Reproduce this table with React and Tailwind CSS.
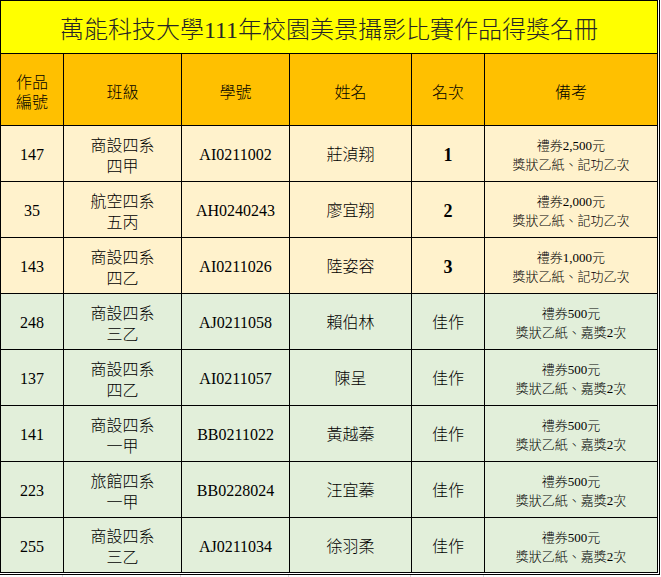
import React from "react";

const rows = [
  { no: "147", cls: ["商設四系", "四甲"], id: "AI0211002", name: "莊湞翔", rank: "1", note: ["禮券2,500元", "獎狀乙紙、記功乙次"], top: true },
  { no: "35", cls: ["航空四系", "五丙"], id: "AH0240243", name: "廖宜翔", rank: "2", note: ["禮券2,000元", "獎狀乙紙、記功乙次"], top: true },
  { no: "143", cls: ["商設四系", "四乙"], id: "AI0211026", name: "陸姿容", rank: "3", note: ["禮券1,000元", "獎狀乙紙、記功乙次"], top: true },
  { no: "248", cls: ["商設四系", "三乙"], id: "AJ0211058", name: "賴伯林", rank: "佳作", note: ["禮券500元", "獎狀乙紙、嘉獎2次"] },
  { no: "137", cls: ["商設四系", "四乙"], id: "AI0211057", name: "陳呈", rank: "佳作", note: ["禮券500元", "獎狀乙紙、嘉獎2次"] },
  { no: "141", cls: ["商設四系", "一甲"], id: "BB0211022", name: "黃越蓁", rank: "佳作", note: ["禮券500元", "獎狀乙紙、嘉獎2次"] },
  { no: "223", cls: ["旅館四系", "一甲"], id: "BB0228024", name: "汪宜蓁", rank: "佳作", note: ["禮券500元", "獎狀乙紙、嘉獎2次"] },
  { no: "255", cls: ["商設四系", "三乙"], id: "AJ0211034", name: "徐羽柔", rank: "佳作", note: ["禮券500元", "獎狀乙紙、嘉獎2次"] },
];

const font = "font-['Liberation_Serif','Noto_Sans_CJK_TC',serif]";

function Cell({ bg, children, className = "" }) {
  return (
    <div className={`${bg} flex flex-col items-center justify-center text-center ${className}`}>
      {children}
    </div>
  );
}

export default function App() {
  const headers = [
    ["作品", "編號"],
    ["班級"],
    ["學號"],
    ["姓名"],
    ["名次"],
    ["備考"],
  ];
  return (
    <div className={`w-[661px] h-[577px] bg-white ${font} text-black font-light`}>
      <div className="inline-flex flex-col bg-white pr-px pb-px border-r border-b border-black">
        <div className="grid grid-cols-[62px_117px_107px_121px_72px_172px] grid-rows-[52px_71px_repeat(7,55px)_54px] gap-px bg-black p-px">
          <div className="col-span-6 bg-[#ffff00] flex items-center justify-center text-[24px] leading-none text-[#262626] pt-[5px]">
            萬能科技大學111年校園美景攝影比賽作品得獎名冊
          </div>
          {headers.map((h, i) => (
            <Cell key={i} bg="bg-[#ffc000]" className="text-[16px] leading-[20px] pt-[7px]">
              {h.map((t) => (
                <span key={t}>{t}</span>
              ))}
            </Cell>
          ))}
          {rows.map((r) => {
            const bg = r.top ? "bg-[#fff2cc]" : "bg-[#e2efda]";
            return (
              <React.Fragment key={r.no}>
                <Cell bg={bg} className="text-[16px] pt-[3px]">{r.no}</Cell>
                <Cell bg={bg} className="text-[16px] leading-[21px] pt-[4px]">
                  <span>{r.cls[0]}</span>
                  <span>{r.cls[1]}</span>
                </Cell>
                <Cell bg={bg} className="text-[16px] pt-[3px]">{r.id}</Cell>
                <Cell bg={bg} className="text-[16px] pt-[3px]">{r.name}</Cell>
                <Cell bg={bg} className={r.top ? "text-[18px] font-bold pt-[3px]" : "text-[16px] pt-[3px]"}>
                  {r.rank}
                </Cell>
                <Cell bg={bg} className="text-[13px] leading-[19px] pt-[3px]">
                  <span>{r.note[0]}</span>
                  <span>{r.note[1]}</span>
                </Cell>
              </React.Fragment>
            );
          })}
        </div>
      </div>
      <div className="grid grid-cols-[63px_118px_108px_122px_73px_173px] h-[2px]">
        <div className="border-r border-[#d9d9d9]" />
        <div className="border-r border-[#d9d9d9]" />
        <div className="border-r border-[#d9d9d9]" />
        <div className="border-r border-[#d9d9d9]" />
        <div className="border-r border-[#d9d9d9]" />
        <div />
      </div>
    </div>
  );
}
